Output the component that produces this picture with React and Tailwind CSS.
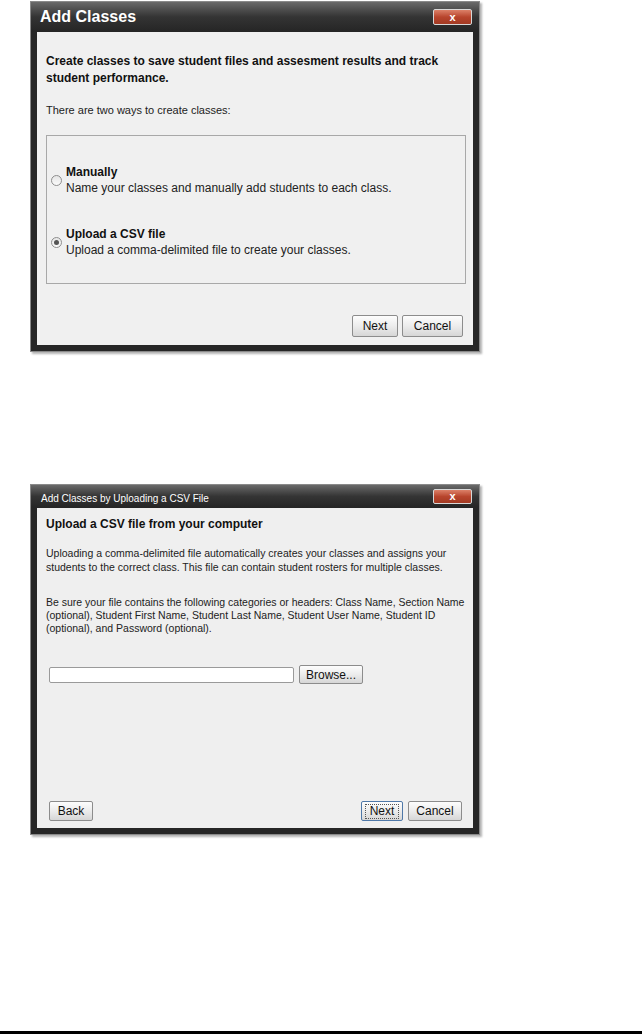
import React from "react";

const font = { fontFamily: '"Liberation Sans", Arial, sans-serif' };

function CloseButton({ tall }) {
  return (
    <div
      className={`mr-[7px] flex w-[39px] items-center justify-center rounded-[2px] border border-[#d8d8d8] bg-gradient-to-b from-[#dc8068] via-[#b8452d] to-[#a33a23] text-[11px] font-bold leading-none text-white ${
        tall ? "h-[16px]" : "h-[15px]"
      }`}
    >
      x
    </div>
  );
}

function Button({ children, className = "", focused }) {
  return (
    <button
      className={`flex items-center justify-center rounded-[2px] border bg-gradient-to-b from-[#fdfdfd] via-[#ececec] to-[#d6d6d6] text-[12px] text-[#111] ${
        focused ? "border-[#4f78a8]" : "border-[#8c8c8c]"
      } ${className}`}
    >
      {focused ? (
        <span className="border border-dotted border-[#555] px-[4px] leading-[13px]">
          {children}
        </span>
      ) : (
        children
      )}
    </button>
  );
}

function Radio({ checked }) {
  return (
    <div className="flex h-[11px] w-[11px] shrink-0 items-center justify-center rounded-full border border-[#8e8e8e] bg-gradient-to-b from-[#e6e6e6] to-[#fafafa]">
      {checked && <div className="h-[5px] w-[5px] rounded-full bg-[#555]" />}
    </div>
  );
}

function Option({ title, text, checked }) {
  return (
    <div className="flex items-center gap-[4px] pl-[4px]">
      <Radio checked={checked} />
      <div>
        <div className="text-[12px] font-bold leading-[16px] text-[#111]">{title}</div>
        <div className="text-[12px] leading-[16px] text-[#222]">{text}</div>
      </div>
    </div>
  );
}

function AddClasses() {
  return (
    <div className="ml-[30px] mt-[1px] w-[450px] border border-[#8a8a8a] bg-[#262626] shadow-[2px_2px_2px_rgba(0,0,0,0.3)]">
      <div className="flex h-[30px] items-center justify-between bg-gradient-to-b from-[#6a6a6a] via-[#343434] to-[#252525] pl-[9px]">
        <span className="text-[16px] font-bold text-white">Add Classes</span>
        <CloseButton tall />
      </div>
      <div className="mx-[6px] mb-[6px] flex h-[313px] flex-col bg-[#f0f0f0] pl-[9px] pr-[7px] pt-[21px]">
        <p className="text-[12px] font-bold leading-[17px] text-[#111]">
          Create classes to save student files and assesment results and track
          student performance.
        </p>
        <p className="mt-[16px] text-[11px] leading-[14px] text-[#222]">
          There are two ways to create classes:
        </p>
        <div className="mt-[18px] h-[149px] border border-[#a8a8a8] pt-[28px]">
          <Option
            title="Manually"
            text="Name your classes and manually add students to each class."
          />
          <div className="h-[30px]" />
          <Option
            title="Upload a CSV file"
            text="Upload a comma-delimited file to create your classes."
            checked
          />
        </div>
        <div className="mt-auto mb-[8px] mr-[3px] flex justify-end gap-[4px]">
          <Button className="h-[22px] w-[46px]">Next</Button>
          <Button className="h-[22px] w-[61px]">Cancel</Button>
        </div>
      </div>
    </div>
  );
}

function UploadCsv() {
  return (
    <div className="ml-[30px] mt-[132px] w-[450px] border border-[#8a8a8a] bg-[#262626] shadow-[2px_2px_2px_rgba(0,0,0,0.3)]">
      <div className="flex h-[23px] items-center justify-between bg-gradient-to-b from-[#6a6a6a] via-[#343434] to-[#252525] pl-[10px]">
        <span className="pt-[3px] text-[10px] text-white">
          Add Classes by Uploading a CSV File
        </span>
        <CloseButton />
      </div>
      <div className="mx-[6px] mb-[6px] flex h-[320px] flex-col bg-[#efefef] pl-[9px] pr-[4px] pt-[8px]">
        <p className="text-[12px] font-bold leading-[16px] text-[#111]">
          Upload a CSV file from your computer
        </p>
        <p className="mt-[14px] text-[10.5px] leading-[14px] text-[#222]">
          Uploading a comma-delimited file automatically creates your classes
          and assigns your students to the correct class. This file can contain
          student rosters for multiple classes.
        </p>
        <p className="mt-[22px] text-[10.5px] leading-[13px] text-[#222]">
          Be sure your file contains the following categories or headers: Class
          Name, Section Name (optional), Student First Name, Student Last Name,
          Student User Name, Student ID (optional), and Password (optional).
        </p>
        <div className="ml-[3px] mt-[30px] flex items-center gap-[5px]">
          <div className="h-[16px] w-[245px] rounded-[2px] border border-[#9a9a9a] bg-white" />
          <Button className="h-[19px] w-[64px] text-[11px]">Browse...</Button>
        </div>
        <div className="mb-[7px] ml-[3px] mr-[7px] mt-auto flex items-center">
          <Button className="h-[20px] w-[44px] text-[11px]">Back</Button>
          <div className="flex-1" />
          <Button className="h-[20px] w-[42px] text-[11px]" focused>
            Next
          </Button>
          <Button className="ml-[5px] h-[20px] w-[54px] text-[11px]">Cancel</Button>
        </div>
      </div>
    </div>
  );
}

export default function App() {
  return (
    <div className="flex h-[1034px] flex-col bg-white" style={font}>
      <AddClasses />
      <UploadCsv />
      <div className="mt-auto h-[3px] w-full bg-black" />
    </div>
  );
}
